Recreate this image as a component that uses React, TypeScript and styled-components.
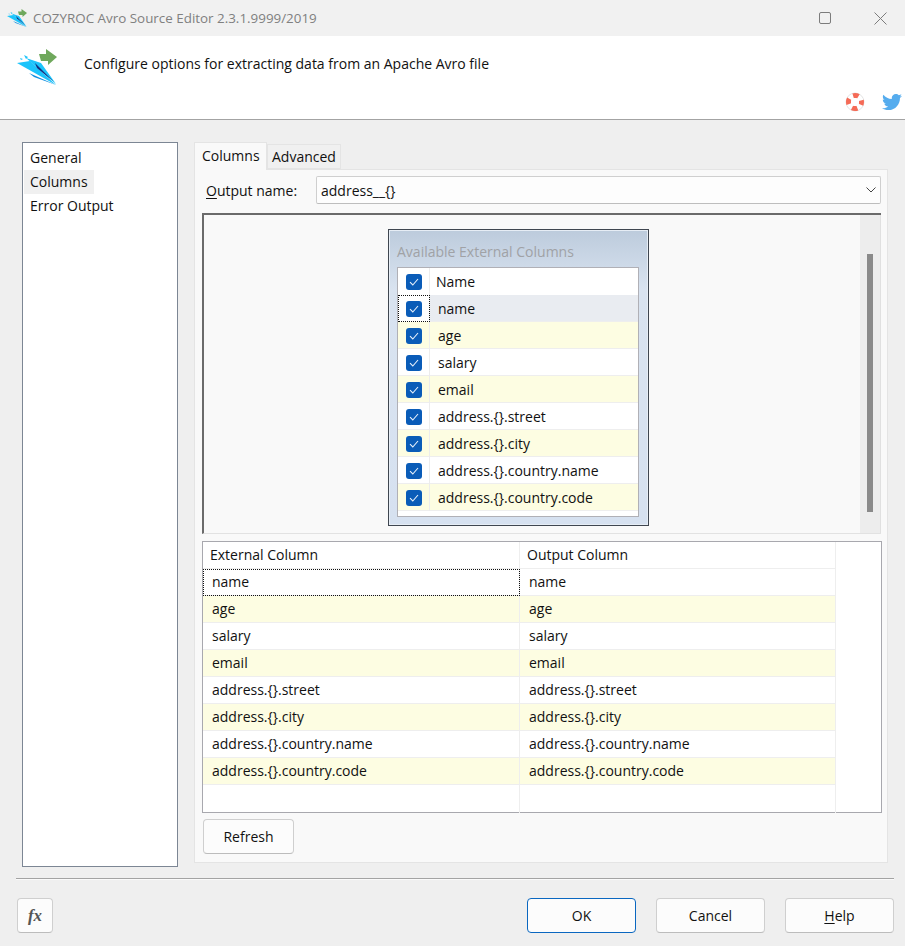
import React, { FC } from 'react';
import styled, { createGlobalStyle } from 'styled-components';
import { FaTwitter } from 'react-icons/fa';

const GlobalStyle = createGlobalStyle`
  html, body { margin: 0; padding: 0; background: #efefef; }
  body { font-family: "Open Sans", "Noto Sans", sans-serif; font-size: 14px; color: #111; }
`;

const Window = styled.div`
  width: 905px;
  height: 946px;
  overflow: hidden;
  display: flex;
  flex-direction: column;
  background: #efefef;
`;

const TitleBar = styled.div`
  height: 36px;
  flex: none;
  display: flex;
  align-items: center;
  padding-left: 7px;
  background: #f1f1f1;
  color: #808080;
`;

const TitleText = styled.span`
  margin-left: 6px;
  font-size: 13.4px;
  flex: 1;
`;

const WinButton = styled.div`
  width: 46px;
  height: 36px;
  display: flex;
  align-items: center;
  justify-content: center;
  margin-right: 11px;
  & + & { margin-right: 2px; margin-left: -2px; }
`;

const Header = styled.div`
  height: 84px;
  flex: none;
  position: relative;
  display: flex;
  align-items: flex-start;
  padding: 13px 0 0 17px;
  box-sizing: border-box;
  background: #fff;
  border-bottom: 1px solid #a3a3a3;
`;

const HeaderText = styled.div`
  margin: 5px 0 0 27px;
  font-size: 14px;
`;

const HeaderIcons = styled.div`
  position: absolute;
  right: 3px;
  bottom: 7px;
  display: flex;
  align-items: center;
  gap: 17px;
`;

const Body = styled.div`
  flex: 1;
  display: flex;
  gap: 16px;
  padding: 22px 18px 0 22px;
  min-height: 0;
`;

const Sidebar = styled.ul`
  list-style: none;
  margin: 0;
  padding: 3px 0 0 1px;
  width: 153px;
  height: 720px;
  flex: none;
  background: #fff;
  border: 1px solid #7c8694;
`;

const SideItem = styled.li<{ $active?: boolean }>`
  height: 24px;
  line-height: 24px;
  width: ${p => (p.$active ? '64px' : 'auto')};
  padding-left: 6px;
  font-size: 14px;
  background: ${p => (p.$active ? '#f0f0f0' : 'transparent')};
`;

const TabArea = styled.div`
  width: 694px;
  display: flex;
  flex-direction: column;
`;

const TabStrip = styled.div`
  height: 27px;
  display: flex;
  align-items: flex-end;
`;

const Tab = styled.div<{ $active?: boolean }>`
  box-sizing: border-box;
  height: ${p => (p.$active ? '28px' : '25px')};
  width: ${p => (p.$active ? '73px' : '74px')};
  padding-left: ${p => (p.$active ? '7px' : '4px')};
  line-height: ${p => (p.$active ? '26px' : '24px')};
  font-size: 14px;
  background: ${p => (p.$active ? '#f9f9f9' : '#f0f0f0')};
  border: 1px solid #e4e4e4;
  border-bottom: ${p => (p.$active ? 'none' : '1px solid #e4e4e4')};
  position: relative;
  z-index: ${p => (p.$active ? 1 : 0)};
  margin-bottom: ${p => (p.$active ? '-1px' : '0')};
`;

const TabPanel = styled.div`
  box-sizing: border-box;
  height: 694px;
  padding: 6px 6px 0 7px;
  background: #f9f9f9;
  border: 1px solid #e4e4e4;
`;

const OutputRow = styled.div`
  display: flex;
  align-items: center;
  height: 28px;
`;

const OutputLabel = styled.label`
  width: 114px;
  padding-left: 4px;
  box-sizing: border-box;
  font-size: 14px;
  u { text-underline-offset: 2px; }
`;

const SelectBox = styled.div`
  flex: 1;
  height: 28px;
  box-sizing: border-box;
  display: flex;
  align-items: center;
  justify-content: space-between;
  padding: 0 4px;
  background: #fdfdfd;
  border: 1px solid #cfcfcf;
  border-bottom-color: #bdbdbd;
  border-radius: 2px;
  font-size: 14px;
`;

const Designer = styled.div`
  box-sizing: border-box;
  margin-top: 9px;
  width: 679px;
  height: 321px;
  display: flex;
  background: #f9f9f9;
  border-top: 2px solid #6b6b6b;
  border-left: 2px solid #6b6b6b;
  border-bottom: 1px solid #e2e2e2;
`;

const DesignerCanvas = styled.div`
  flex: 1;
  padding: 14px 0 0 184px;
`;

const ScrollTrack = styled.div`
  width: 21px;
  flex: none;
  box-sizing: border-box;
  padding: 39px 0 0 7px;
  background: #ededed;
  border-right: 1px solid #e0e0e0;
`;

const ScrollThumb = styled.div`
  width: 6px;
  height: 258px;
  background: #8a8a8a;
`;

const ColumnsBox = styled.div`
  box-sizing: border-box;
  width: 261px;
  height: 297px;
  padding: 0 9px 9px 8px;
  border: 1px solid #3f4650;
  background: linear-gradient(#bccbdc, #d9e3f0 20%, #d6e1f0);
  box-shadow: inset 0 0 0 1px #e6edf5;
`;

const ColumnsTitle = styled.div`
  height: 37px;
  line-height: 44px;
  font-size: 14px;
  color: #a0a2a6;
`;

const ColumnsTable = styled.div`
  background: #fff;
  border: 1px solid #b0b0b6;
  height: 248px;
  overflow: hidden;
`;

const CheckRow = styled.div<{ $alt?: boolean; $focus?: boolean; $head?: boolean }>`
  display: grid;
  grid-template-columns: 32px 1fr;
  height: 27px;
  box-sizing: border-box;
  align-items: center;
  background: ${p => (p.$focus ? '#e9ecf1' : p.$alt ? '#fdfde2' : '#fff')};
  border-bottom: 1px solid ${p => (p.$head ? '#fff' : '#eeeeee')};
  font-size: 14px;
`;

const CheckCell = styled.div<{ $focus?: boolean }>`
  height: 27px;
  box-sizing: border-box;
  display: flex;
  align-items: center;
  justify-content: center;
  border-right: 1px solid #ececec;
  outline: ${p => (p.$focus ? '1px dotted #111' : 'none')};
  outline-offset: -1px;
  background: ${p => (p.$focus ? '#fff' : 'transparent')};
`;

const CheckBox = styled.span`
  width: 16px;
  height: 16px;
  border-radius: 3px;
  background: #0a5cb8;
  display: flex;
  align-items: center;
  justify-content: center;
`;

const CheckLabel = styled.span<{ $head?: boolean }>`
  padding-left: ${p => (p.$head ? '6px' : '8px')};
`;

const Grid = styled.div`
  box-sizing: border-box;
  margin-top: 7px;
  width: 680px;
  height: 272px;
  background: #fff;
  border: 1px solid #a8a8ae;
  border-left-color: #a8a8ae;
`;

const GridRow = styled.div<{ $alt?: boolean; $head?: boolean }>`
  display: grid;
  grid-template-columns: 317px 316px;
  width: 633px;
  height: 27px;
  box-sizing: border-box;
  align-items: center;
  background: ${p => (p.$alt ? '#fdfde2' : '#fff')};
  border-bottom: 1px solid #eeeeee;
  font-size: 14px;
`;

const GridCell = styled.div<{ $head?: boolean; $focus?: boolean }>`
  height: 27px;
  line-height: 26px;
  box-sizing: border-box;
  padding-left: ${p => (p.$head ? '7px' : '9px')};
  border-right: 1px solid #eeeeee;
  outline: ${p => (p.$focus ? '1px dotted #111' : 'none')};
  outline-offset: -1px;
`;

const GridFill = styled.div`
  display: grid;
  grid-template-columns: 317px 316px;
  width: 633px;
  height: 28px;
  & > div { border-right: 1px solid #eeeeee; }
`;

const Button = styled.button<{ $primary?: boolean; $w?: number }>`
  box-sizing: border-box;
  width: ${p => p.$w ?? 109}px;
  height: 35px;
  padding: 0;
  font-family: inherit;
  font-size: 14px;
  color: #111;
  background: #fcfcfc;
  border: 1px solid ${p => (p.$primary ? '#0a67c0' : '#cfcfcf')};
  border-bottom-color: ${p => (p.$primary ? '#0a67c0' : '#bcbcbc')};
  border-radius: 4px;
  u { text-underline-offset: 2px; }
`;

const RefreshWrap = styled.div`
  margin-top: 6px;
  padding-left: 1px;
`;

const Separator = styled.div`
  flex: none;
  height: 1px;
  margin: 13px 11px 0 16px;
  background: #a3a3a3;
  border-bottom: 1px solid #fafafa;
`;

const Footer = styled.div`
  flex: none;
  display: flex;
  align-items: flex-start;
  padding: 18px 11px 13px 17px;
  gap: 20px;
`;

const FxButton = styled(Button)`
  width: 36px;
  margin-right: auto;
  font-family: "Liberation Serif", serif;
  font-style: italic;
  font-weight: bold;
  font-size: 17px;
  color: #555;
`;

const Logo: FC<{ size: number }> = ({ size }) => (
  <svg width={size} height={size * 0.9} viewBox="0 0 40 36" style={{ flex: 'none' }}>
    <path d="M0 14 L13 12 L39 36 Z" fill="#1cc4fb" />
    <path d="M12 24 L39 36 L17 28 Z" fill="#0f8fe0" />
    <path d="M9 9 L24 14 L39 35 L16 15 Z" fill="#1cc4fb" />
    <path d="M18 14 L37 33 L20 19 Z" fill="#12307f" />
    <path d="M7 6 L11 8 L9 10 Z M3 9 L6 10 L4 11 Z" fill="#1cc4fb" />
    <path d="M22 5 H29 V0 L40 8 L31 16 V12 H24 Z" fill="#6fa85c" />
  </svg>
);

const LifeBuoy: FC = () => (
  <svg width="20" height="20" viewBox="0 0 20 20">
    <circle cx="10" cy="10" r="9" fill="#fff" stroke="#e4e4e4" strokeWidth="1" />
    <circle cx="10" cy="10" r="6.5" fill="none" stroke="#f56b57" strokeWidth="5" strokeDasharray="5.5 4.7" strokeDashoffset="2.7" />
    <circle cx="10" cy="10" r="4" fill="#fff" />
  </svg>
);

const Check: FC = () => (
  <svg width="10" height="8" viewBox="0 0 10 8">
    <path d="M1 4.2 L3.8 7 L9 1" fill="none" stroke="#e8f1fb" strokeWidth="1.1" />
  </svg>
);

const Chevron: FC = () => (
  <svg width="10" height="6" viewBox="0 0 10 6">
    <path d="M0.5 0.5 L5 5 L9.5 0.5" fill="none" stroke="#444" strokeWidth="1" />
  </svg>
);

const columns = [
  'name',
  'age',
  'salary',
  'email',
  'address.{}.street',
  'address.{}.city',
  'address.{}.country.name',
  'address.{}.country.code',
];

export default function App() {
  return (
    <Window>
      <GlobalStyle />
      <TitleBar>
        <Logo size={20} />
        <TitleText>COZYROC Avro Source Editor 2.3.1.9999/2019</TitleText>
        <WinButton>
          <svg width="12" height="12" viewBox="0 0 12 12">
            <rect x="0.5" y="0.5" width="11" height="11" rx="1.5" fill="none" stroke="#7c7c7c" />
          </svg>
        </WinButton>
        <WinButton>
          <svg width="13" height="13" viewBox="0 0 13 13">
            <path d="M0.5 0.5 L12.5 12.5 M12.5 0.5 L0.5 12.5" stroke="#7c7c7c" />
          </svg>
        </WinButton>
      </TitleBar>
      <Header>
        <Logo size={40} />
        <HeaderText>Configure options for extracting data from an Apache Avro file</HeaderText>
        <HeaderIcons>
          <LifeBuoy />
          <FaTwitter size={20} color="#55acee" />
        </HeaderIcons>
      </Header>
      <Body>
        <Sidebar>
          <SideItem>General</SideItem>
          <SideItem $active>Columns</SideItem>
          <SideItem>Error Output</SideItem>
        </Sidebar>
        <TabArea>
          <TabStrip>
            <Tab $active>Columns</Tab>
            <Tab>Advanced</Tab>
          </TabStrip>
          <TabPanel>
            <OutputRow>
              <OutputLabel><u>O</u>utput name:</OutputLabel>
              <SelectBox>
                address__{'{}'}
                <Chevron />
              </SelectBox>
            </OutputRow>
            <Designer>
              <DesignerCanvas>
                <ColumnsBox>
                  <ColumnsTitle>Available External Columns</ColumnsTitle>
                  <ColumnsTable>
                    <CheckRow $head>
                      <CheckCell><CheckBox><Check /></CheckBox></CheckCell>
                      <CheckLabel $head>Name</CheckLabel>
                    </CheckRow>
                    {columns.map((c, i) => (
                      <CheckRow key={c} $alt={i % 2 === 1} $focus={i === 0}>
                        <CheckCell $focus={i === 0}><CheckBox><Check /></CheckBox></CheckCell>
                        <CheckLabel>{c}</CheckLabel>
                      </CheckRow>
                    ))}
                  </ColumnsTable>
                </ColumnsBox>
              </DesignerCanvas>
              <ScrollTrack>
                <ScrollThumb />
              </ScrollTrack>
            </Designer>
            <Grid>
              <GridRow $head>
                <GridCell $head>External Column</GridCell>
                <GridCell $head>Output Column</GridCell>
              </GridRow>
              {columns.map((c, i) => (
                <GridRow key={c} $alt={i % 2 === 1}>
                  <GridCell $focus={i === 0}>{c}</GridCell>
                  <GridCell>{c}</GridCell>
                </GridRow>
              ))}
              <GridFill><div /><div /></GridFill>
            </Grid>
            <RefreshWrap>
              <Button $w={91}>Refresh</Button>
            </RefreshWrap>
          </TabPanel>
        </TabArea>
      </Body>
      <Separator />
      <Footer>
        <FxButton>fx</FxButton>
        <Button $primary>OK</Button>
        <Button>Cancel</Button>
        <Button><u>H</u>elp</Button>
      </Footer>
    </Window>
  );
}
